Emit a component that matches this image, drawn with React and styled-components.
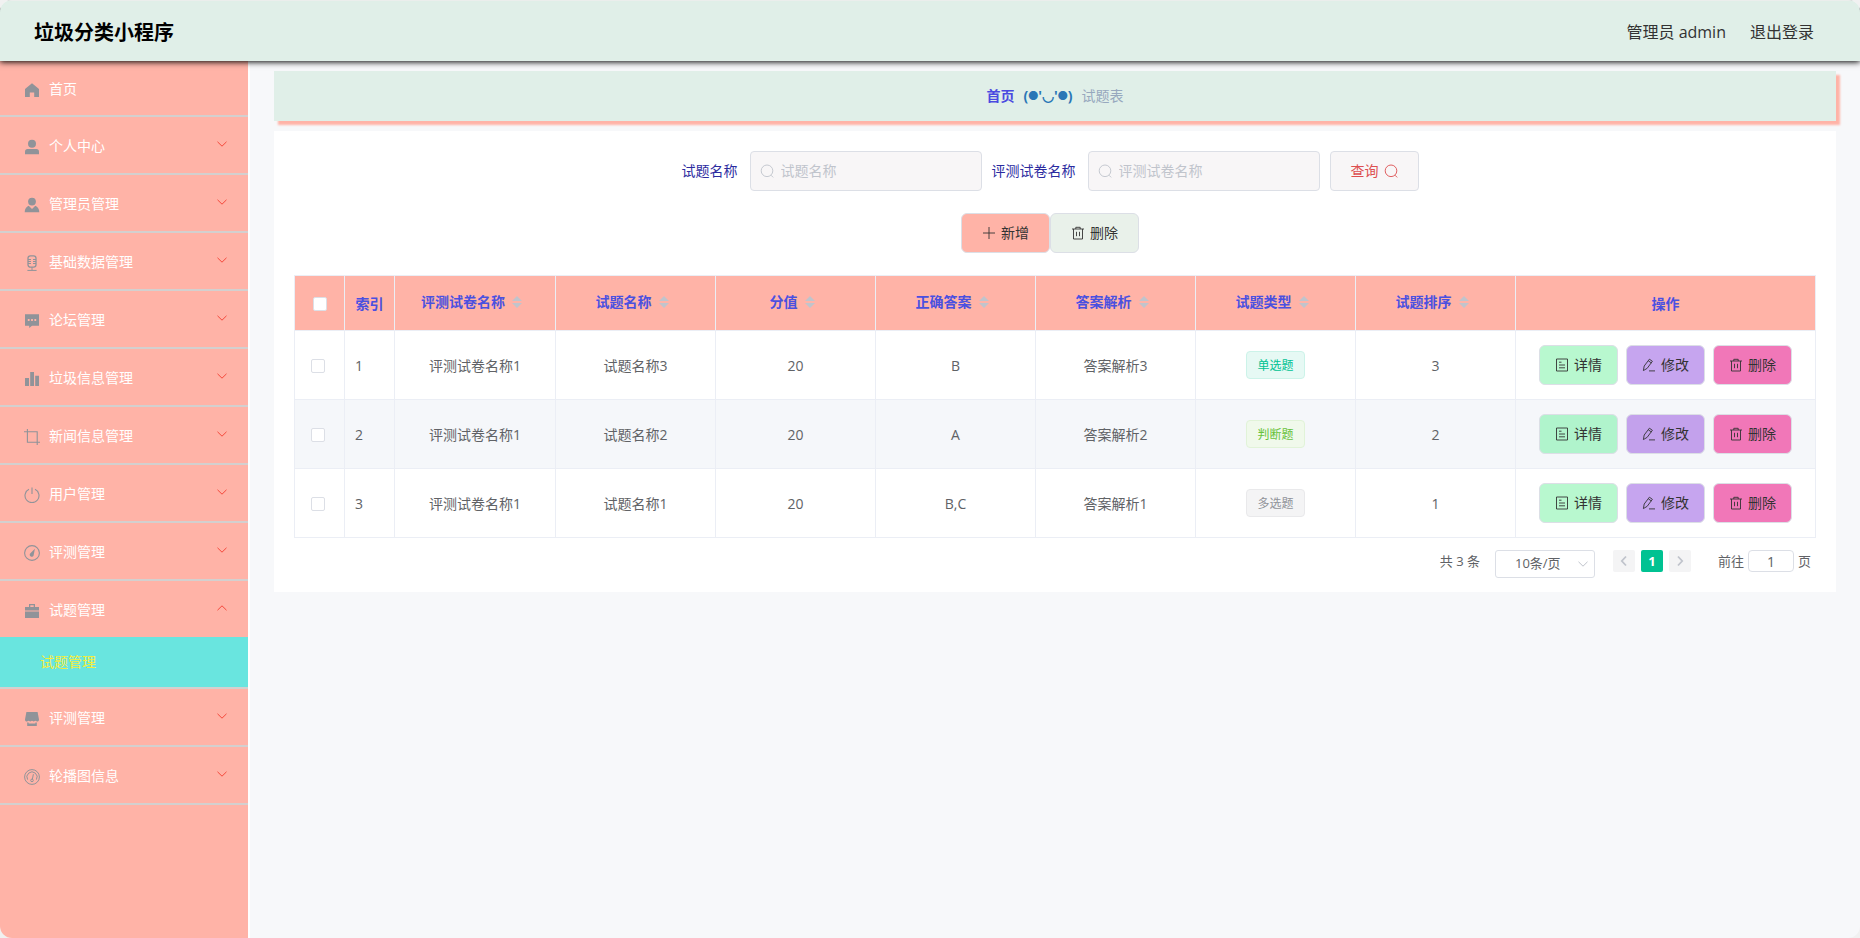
import React, { useState } from 'react'
import styled, { createGlobalStyle } from 'styled-components'

const GlobalStyle = createGlobalStyle`
    * { box-sizing: border-box; }
    body {
        margin: 0;
        background: #f1f1f1;
    }
    body, button, input, select {
        font-family: "Open Sans", "Noto Sans CJK SC", sans-serif;
        font-size: 14px;
    }
    button, select { cursor: pointer; }
`

const Page = styled.div`
    display: flex;
    flex-direction: column;
    min-height: 100vh;
    border-radius: 12px;
    overflow: hidden;
    background: #f7f8fa;
`
const TopBar = styled.header`
    position: relative;
    z-index: 2;
    display: flex;
    align-items: center;
    justify-content: space-between;
    height: 61px;
    padding: 1px 46px 0 34px;
    background: #e0efe8;
    border-top: 1px solid #ebeeec;
    box-shadow: 0 1px 6px #000;
`
const SiteName = styled.h1`
    margin: 0;
    padding-top: 2px;
    font-size: 20px;
    line-height: 28px;
    font-weight: 700;
    color: #000;
`
const UserArea = styled.div`
    display: flex;
    gap: 24px;
    font-size: 16px;
    line-height: 24px;
    color: #333;
`
const LogoutLink = styled.a`
    color: inherit;
    text-decoration: none;
`
const Body = styled.div`
    display: flex;
    flex: 1;
`

/* ---- side menu ---- */
const Sidebar = styled.nav`
    flex: none;
    width: 250px;
    background: #ffb3a7;
    border-right: 2px solid #fff;
`
const MenuGroup = styled.div`
    border-bottom: 2px solid #d3d0cf;
`
const MenuTitle = styled.button`
    display: flex;
    align-items: center;
    width: 100%;
    height: ${(p) => (p.$first ? '54px' : '56px')};
    padding: 2px 20px 0;
    border: 0;
    background: none;
    color: #fff;
    line-height: 20px;
    text-align: left;
`
const MenuIcon = styled.svg`
    flex: none;
    width: 16px;
    height: 16px;
    margin: 1px 9px 0 4px;
    color: #909399;
`
const MenuText = styled.span`
    flex: 1;
`
const Arrow = styled.svg`
    width: 12px;
    height: 12px;
    margin-bottom: 4px;
    color: #f5483b;
`
const SubLink = styled.a`
    display: flex;
    align-items: center;
    height: 50px;
    padding-left: 40px;
    background: #69e5df;
    color: #f5ee3c;
    line-height: 20px;
    text-decoration: none;
`

/* ---- content ---- */
const Content = styled.main`
    flex: 1;
    min-width: 0;
    padding: 10px 24px;
`
const Breadcrumb = styled.div`
    display: flex;
    align-items: center;
    justify-content: center;
    gap: 9px;
    height: 50px;
    margin-bottom: 10px;
    background: #e0efe8;
    box-shadow: 4px 4px 2px #ffb3a7;
    line-height: 20px;
    color: #97a8be;
`
const CrumbLink = styled.a`
    color: #4a4ae0;
    font-weight: 700;
    text-decoration: none;
`
const CrumbFace = styled.span`
    display: flex;
    color: #2a76b6;
    font-weight: 700;
`
const Cheek = styled.span`
    font-size: 10px;
`
const Panel = styled.section`
    padding: 20px 20px 14px;
    background: #fff;
`
const SearchForm = styled.form`
    display: flex;
    justify-content: center;
    gap: 10px;
    margin-bottom: 22px;
    padding-right: 10px;
`
const Field = styled.div`
    display: flex;
    align-items: center;
    gap: 12px;
`
const FieldLabel = styled.label`
    color: #2b2b9f;
    line-height: 40px;
`
const InputWrap = styled.div`
    display: flex;
    align-items: center;
    gap: 7px;
    width: 232px;
    height: 40px;
    padding: 0 9px;
    border: 1px solid #dcdfe6;
    border-radius: 4px;
    background: #f8f6f7;
    color: #c0c4cc;
`
const TextInput = styled.input`
    flex: 1;
    min-width: 0;
    height: 30px;
    padding: 0 0 2px;
    border: 0;
    outline: none;
    background: none;
    color: #606266;
    &::placeholder { color: #c0c4cc; opacity: 1; }
`
const SmallIcon = styled.svg`
    flex: none;
    width: 14px;
    height: 14px;
`
const Button = styled.button`
    display: inline-flex;
    align-items: center;
    gap: 5px;
    height: 40px;
    padding: 0 ${(p) => (p.$row ? '15px' : '20px')};
    border: 1px solid #dcdfe6;
    border-radius: ${(p) => p.$radius || '6px'};
    background: ${(p) => p.$bg};
    color: ${(p) => p.$color || '#333'};
    line-height: 20px;
`
const Toolbar = styled.div`
    display: flex;
    justify-content: center;
    margin-bottom: 22px;
    padding-right: 10px;
`
const Table = styled.table`
    width: 100%;
    table-layout: fixed;
    border-collapse: separate;
    border-spacing: 0;
    border-top: 1px solid #ebeef5;
    border-left: 1px solid #ebeef5;
    color: #606266;
    line-height: 24px;
`
const Col = styled.col`
    width: ${(p) => p.$w || 'auto'};
`
const Th = styled.th`
    height: 55px;
    padding: ${(p) => (p.$sort ? '0 0 2px' : '2px 0 0')};
    border-right: 1px solid #ebeef5;
    border-bottom: 1px solid #ebeef5;
    background: #ffb3a7;
    color: #4a50e0;
    font-weight: 700;
    text-align: center;
`
const SortLabel = styled.span`
    display: inline-flex;
    align-items: center;
`
const SortIcon = styled.svg`
    width: 24px;
    height: 14px;
    color: #c0c4cc;
`
const Tr = styled.tr`
    background: ${(p) => (p.$striped ? '#f5f7fa' : '#fff')};
`
const Td = styled.td`
    height: 69px;
    padding: ${(p) => (p.$plain ? '0' : '2px 0 0')};
    padding-left: ${(p) => (p.$left ? '10px' : '0')};
    border-right: 1px solid #ebeef5;
    border-bottom: 1px solid #ebeef5;
    text-align: ${(p) => (p.$left ? 'left' : 'center')};
`
const Checkbox = styled.input`
    appearance: none;
    display: block;
    width: 14px;
    height: 14px;
    margin: ${(p) => (p.$head ? '0 auto 0 18px' : '0 auto 0 16px')};
    border: 1px solid #dcdfe6;
    border-radius: 2px;
    background: #fff;
    &:checked { background: #00c292; border-color: #00c292; }
`
const tagColors = {
    primary: ['#e6f9f4', '#ccf3e9', '#00c292'],
    success: ['#f0f9eb', '#e1f3d8', '#67c23a'],
    info: ['#f4f4f5', '#e9e9eb', '#909399'],
}
const Tag = styled.span`
    display: inline-block;
    height: 28px;
    padding: 0 10px;
    border: 1px solid ${(p) => tagColors[p.$type][1]};
    border-radius: 4px;
    background: ${(p) => tagColors[p.$type][0]};
    color: ${(p) => tagColors[p.$type][2]};
    font-size: 12px;
    line-height: 27px;
    vertical-align: middle;
`
const Actions = styled.div`
    display: flex;
    justify-content: center;
    gap: 8px;
    padding-bottom: 1px;
`

/* ---- pagination ---- */
const Pagination = styled.div`
    display: flex;
    align-items: flex-start;
    justify-content: flex-end;
    margin-top: 12px;
    padding-right: 5px;
    color: #606266;
    font-size: 13px;
    line-height: 22px;
`
const SelectWrap = styled.div`
    position: relative;
    width: 100px;
    height: 28px;
    margin: 0 18px 0 15px;
    color: #c0c4cc;
`
const SizeSelect = styled.select`
    appearance: none;
    width: 100%;
    height: 28px;
    padding: 0 25px 2px 19px;
    border: 1px solid #dcdfe6;
    border-radius: 3px;
    background: #fff;
    color: #606266;
    font-size: 13px;
`
const SelectArrow = styled.svg`
    position: absolute;
    top: 8px;
    right: 6px;
    width: 12px;
    height: 12px;
    pointer-events: none;
`
const Pager = styled.div`
    display: flex;
    gap: 6px;
    margin-right: 27px;
`
const PageButton = styled.button`
    display: flex;
    align-items: center;
    justify-content: center;
    width: 22px;
    height: 22px;
    padding: 0;
    border: 0;
    border-radius: 2px;
    background: ${(p) => (p.$active ? '#00c292' : '#f4f4f5')};
    color: ${(p) => (p.$active ? '#fff' : '#c0c4cc')};
    font-size: 13px;
    font-weight: 700;
`
const JumpLabel = styled.label`
    display: flex;
    gap: 4px;
`
const JumpInput = styled.input`
    width: 46px;
    height: 22px;
    padding: 0;
    border: 1px solid #dcdfe6;
    border-radius: 4px;
    color: #606266;
    text-align: center;
`

// solid glyphs use fill, outlined ones use stroke
const menuIcons = {
    home: <path fill="currentColor" d="M8 1.2 1 7v8h4.8v-4.4h4.4V15H15V7z" />,
    user: (
        <g fill="currentColor">
            <circle cx="8" cy="4.8" r="4" />
            <path d="M1 15.3v-2.6C1 11 2 10 3.6 10h8.8c1.6 0 2.6 1 2.6 2.7v2.6z" />
        </g>
    ),
    custom: (
        <g fill="currentColor">
            <circle cx="8" cy="4.6" r="3.9" />
            <path d="M.7 15.3c0-3.2 1.5-5.6 4-6.6L8 12l3.3-3.3c2.5 1 4 3.4 4 6.6z" />
        </g>
    ),
    mic: (
        <g fill="none" stroke="currentColor" strokeWidth="1">
            <rect x="4" y=".8" width="8" height="11.4" rx="2.4" strokeWidth="1.3" />
            <path d="M4 4.5h3M9 4.5h3M4 6.5h3M9 6.5h3M4 8.5h3M9 8.5h3M8 12v3.2M3.4 15.4h9.2" />
        </g>
    ),
    comment: (
        <path
            fill="currentColor"
            fillRule="evenodd"
            d="M1 1.2h14v11.6H8L5.2 15v-2.2H1zM3.8 6v2h1.8V6zM7.1 6v2h1.8V6zM10.4 6v2h1.8V6z"
        />
    ),
    data: <path fill="currentColor" d="M1 7h4v8H1zM6.2 1h3.8v14H6.2zM11.2 4.8H15V15h-3.8z" />,
    crop: <path fill="none" stroke="currentColor" strokeWidth="1.1" d="M3.4 0v13.2H16M0 2.8h13.2V16" />,
    power: (
        <path
            fill="none"
            stroke="currentColor"
            strokeWidth="1.1"
            d="M8 .4V7M5 2.3a7 7 0 1 0 6 0"
        />
    ),
    compass: (
        <g>
            <circle cx="8" cy="8" r="7.4" fill="none" stroke="currentColor" strokeWidth="1.1" />
            <path fill="currentColor" d="M10.9 3.8 9.7 9.9a2 2 0 1 1-3.3-1.6z" />
        </g>
    ),
    bag: (
        <path
            fill="currentColor"
            fillRule="evenodd"
            d="M5 4V1h6v3h4v3.5H1V4zM6.3 2.2V4h3.4V2.2zM1 8.6h14V15H1z"
        />
    ),
    shop: (
        <g fill="currentColor">
            <path d="M2.4 1h11.2L15 8.6c0 1.4-.8 2-1.9 2l-1.7-.8-1.7.8-1.7-.8-1.7.8-1.7-.8-1.7.8C1.800 10.600 1 10 1 8.600z" />
            <path d="M3.200 11.400h1.400v1.200h6.800v-1.200h1.400V15H3.200z" />
        </g>
    ),
    odometer: (
        <g fill="none" stroke="currentColor" strokeWidth="1">
            <circle cx="8" cy="8" r="7.4" />
            <path d="M3.6 10.6a5.1 5.1 0 1 1 8.8 0" />
            <path d="M9.4 5.2 8.4 10" />
            <circle cx="8" cy="11.4" r="1.3" />
        </g>
    ),
}

const icons = {
    search: <><circle cx="7" cy="6.8" r="5.8" /><path d="m11 11.2 2.2 2.2" /></>,
    plus: <path d="M7 1v12M1 7h12" />,
    trash: <path d="M1 3h12M2.5 3v10h9V3M4.8 3V1.3h4.4V3M5.5 5.8v4.4M8.5 5.8v4.4" />,
    doc: <path d="M1.5 1h11v12h-11zM4 4.2h2.5M4 7h6M4 9.8h6" />,
    edit: <path d="M1.4 12.6 2.2 8 7.4 1.2l3 2.1-5.2 7zM6.3 2.8l3 2.1M7 12.9h6" />,
}

const Icon = ({ name }) => (
    <SmallIcon viewBox="0 0 14 14" fill="none" stroke="currentColor" strokeWidth=".9" aria-hidden="true">
        {icons[name]}
    </SmallIcon>
)

const menu = [
    { text: '首页', icon: 'home' },
    { text: '个人中心', icon: 'user', sub: true },
    { text: '管理员管理', icon: 'custom', sub: true },
    { text: '基础数据管理', icon: 'mic', sub: true },
    { text: '论坛管理', icon: 'comment', sub: true },
    { text: '垃圾信息管理', icon: 'data', sub: true },
    { text: '新闻信息管理', icon: 'crop', sub: true },
    { text: '用户管理', icon: 'power', sub: true },
    { text: '评测管理', icon: 'compass', sub: true },
    { text: '试题管理', icon: 'bag', sub: true, open: '试题管理' },
    { text: '评测管理', icon: 'shop', sub: true },
    { text: '轮播图信息', icon: 'odometer', sub: true },
]

const columns = ['评测试卷名称', '试题名称', '分值', '正确答案', '答案解析', '试题类型', '试题排序']

const rows = [
    { paper: '评测试卷名称1', name: '试题名称3', score: 20, answer: 'B', analysis: '答案解析3', type: '单选题', tag: 'primary', sort: 3 },
    { paper: '评测试卷名称1', name: '试题名称2', score: 20, answer: 'A', analysis: '答案解析2', type: '判断题', tag: 'success', sort: 2 },
    { paper: '评测试卷名称1', name: '试题名称1', score: 20, answer: 'B,C', analysis: '答案解析1', type: '多选题', tag: 'info', sort: 1 },
]

function SideMenu() {
    return (
        <Sidebar>
            {menu.map((item, i) => (
                <MenuGroup key={i}>
                    <MenuTitle type="button" $first={i === 0}>
                        <MenuIcon viewBox="0 0 16 16" aria-hidden="true">{menuIcons[item.icon]}</MenuIcon>
                        <MenuText>{item.text}</MenuText>
                        {item.sub && (
                            <Arrow viewBox="0 0 12 12" fill="none" stroke="currentColor" aria-hidden="true">
                                <path d={item.open ? 'M1.5 8.2 6 3.8l4.5 4.4' : 'M1.5 3.8 6 8.2l4.5-4.4'} />
                            </Arrow>
                        )}
                    </MenuTitle>
                    {item.open && <SubLink href="#">{item.open}</SubLink>}
                </MenuGroup>
            ))}
        </Sidebar>
    )
}

function SearchField({ id, label }) {
    return (
        <Field>
            <FieldLabel htmlFor={id}>{label}</FieldLabel>
            <InputWrap>
                <Icon name="search" />
                <TextInput id={id} type="text" placeholder={label} />
            </InputWrap>
        </Field>
    )
}

function QuestionTable() {
    const [checked, setChecked] = useState([])
    const toggle = (i) =>
        setChecked(checked.includes(i) ? checked.filter((c) => c !== i) : [...checked, i])
    const all = checked.length === rows.length

    return (
        <Table>
            <colgroup>
                <Col $w="50px" />
                <Col $w="50px" />
                {columns.map((c, i) => <Col key={c} $w={i === 0 ? '161px' : 'auto'} />)}
                <Col $w="300px" />
            </colgroup>
            <thead>
                <tr>
                    <Th>
                        <Checkbox $head type="checkbox" aria-label="全选" checked={all}
                            onChange={() => setChecked(all ? [] : rows.map((r, i) => i))} />
                    </Th>
                    <Th>索引</Th>
                    {columns.map((c) => (
                        <Th key={c} $sort>
                            <SortLabel>
                                {c}
                                <SortIcon viewBox="0 0 24 14" fill="currentColor" aria-hidden="true">
                                    <path d="M7 6h10l-5-5zM7 8h10l-5 5z" />
                                </SortIcon>
                            </SortLabel>
                        </Th>
                    ))}
                    <Th>操作</Th>
                </tr>
            </thead>
            <tbody>
                {rows.map((r, i) => (
                    <Tr key={i} $striped={i % 2 === 1}>
                        <Td>
                            <Checkbox type="checkbox" aria-label={r.name} checked={checked.includes(i)}
                                onChange={() => toggle(i)} />
                        </Td>
                        <Td $left>{i + 1}</Td>
                        <Td>{r.paper}</Td>
                        <Td>{r.name}</Td>
                        <Td>{r.score}</Td>
                        <Td>{r.answer}</Td>
                        <Td>{r.analysis}</Td>
                        <Td $plain><Tag $type={r.tag}>{r.type}</Tag></Td>
                        <Td>{r.sort}</Td>
                        <Td $plain>
                            <Actions>
                                <Button type="button" $row $bg={i % 2 ? '#b0f4cc' : '#b8f8cf'}><Icon name="doc" />详情</Button>
                                <Button type="button" $row $bg={i % 2 ? '#c3a1ec' : '#c6a5ef'}><Icon name="edit" />修改</Button>
                                <Button type="button" $row $bg="#f177b8"><Icon name="trash" />删除</Button>
                            </Actions>
                        </Td>
                    </Tr>
                ))}
            </tbody>
        </Table>
    )
}

function App() {
    return (
        <Page>
            <GlobalStyle />
            <TopBar>
                <SiteName>垃圾分类小程序</SiteName>
                <UserArea>
                    <span>管理员 admin</span>
                    <LogoutLink href="#">退出登录</LogoutLink>
                </UserArea>
            </TopBar>
            <Body>
                <SideMenu />
                <Content>
                    <Breadcrumb>
                        <CrumbLink href="#">首页</CrumbLink>
                        <CrumbFace>(<Cheek>●</Cheek>'◡'<Cheek>●</Cheek>)</CrumbFace>
                        <span>试题表</span>
                    </Breadcrumb>
                    <Panel>
                        <SearchForm onSubmit={(e) => e.preventDefault()}>
                            <SearchField id="questionName" label="试题名称" />
                            <SearchField id="paperName" label="评测试卷名称" />
                            <Button type="submit" $bg="#f8f6f7" $color="#dd4f50" $radius="4px">
                                查询<Icon name="search" />
                            </Button>
                        </SearchForm>
                        <Toolbar>
                            <Button type="button" $bg="#ffb3a7"><Icon name="plus" />新增</Button>
                            <Button type="button" $bg="#e9f1ea"><Icon name="trash" />删除</Button>
                        </Toolbar>
                        <QuestionTable />
                        <Pagination>
                            <span>共 3 条</span>
                            <SelectWrap>
                                <SizeSelect aria-label="每页条数" defaultValue="10">
                                    <option value="10">10条/页</option>
                                    <option value="20">20条/页</option>
                                </SizeSelect>
                                <SelectArrow viewBox="0 0 12 12" fill="none" stroke="currentColor" aria-hidden="true">
                                    <path d="M1.5 3.8 6 8.2l4.5-4.4" />
                                </SelectArrow>
                            </SelectWrap>
                            <Pager>
                                <PageButton type="button" aria-label="上一页">
                                    <SmallIcon viewBox="0 0 14 14" fill="none" stroke="currentColor" strokeWidth="1.8"><path d="M9 2.5 4.8 7 9 11.5" /></SmallIcon>
                                </PageButton>
                                <PageButton type="button" $active>1</PageButton>
                                <PageButton type="button" aria-label="下一页">
                                    <SmallIcon viewBox="0 0 14 14" fill="none" stroke="currentColor" strokeWidth="1.8"><path d="M5 2.5 9.2 7 5 11.5" /></SmallIcon>
                                </PageButton>
                            </Pager>
                            <JumpLabel>
                                前往
                                <JumpInput type="text" defaultValue="1" />
                                页
                            </JumpLabel>
                        </Pagination>
                    </Panel>
                </Content>
            </Body>
        </Page>
    )
}

export default App
